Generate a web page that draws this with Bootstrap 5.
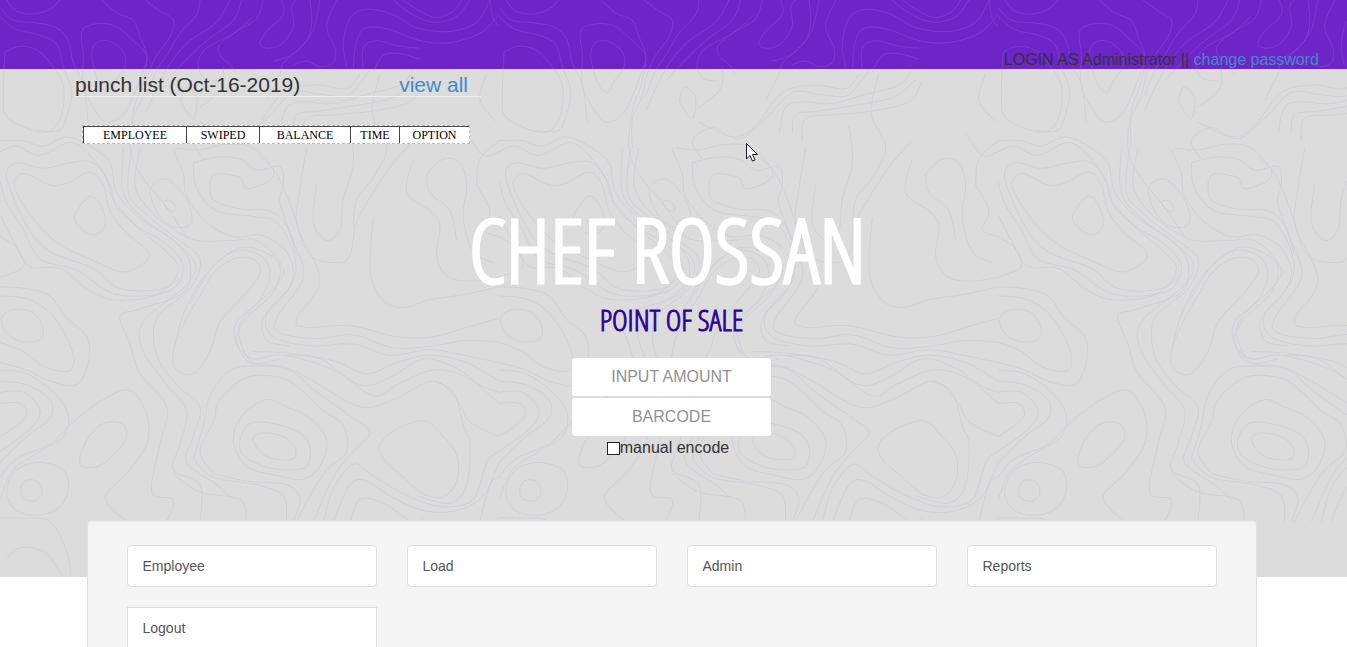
<!DOCTYPE html>
<html lang="en">
<head>
<meta charset="utf-8">
<meta name="viewport" content="width=device-width, initial-scale=1">
<title>Chef Rossan Point of Sale</title>
<link href="https://cdn.jsdelivr.net/npm/bootstrap@5.3.0/dist/css/bootstrap.min.css" rel="stylesheet">
<style>
body{font-family:"Liberation Sans",Arial,sans-serif;font-size:16px;line-height:20px;color:#333;background:#fff}
a{color:#428bca;text-decoration:none}
.hero{height:577px;background:#dcdcdc}
.contours{z-index:0}
.userbar{height:69px;padding-right:28px;line-height:18px}
.punch{width:406px;margin-left:75px}
.punch h1{height:28px;font-size:21px;line-height:32px;border-bottom:1px solid #eee;padding-right:13px;font-weight:400}
.punch table{width:388px;margin:28px 0 0 7px;border:1px dashed #bbb;border-collapse:separate;border-spacing:0;font:12px/16px "Liberation Serif",serif;color:#000;background:#fff;table-layout:fixed}
.punch th{font-weight:400;text-align:center;padding:0;border-left:1px solid #444;border-top:1px solid #444}
.center-stack{padding-right:4px}
.brand,.tagline{font-family:"Open Sans Condensed Light","Open Sans Condensed","Liberation Sans",sans-serif;font-weight:300}
.brand{color:#fff;font-size:88px;line-height:106px;margin-top:52px;padding-right:8px;-webkit-text-stroke:3px #fff}
.tagline{color:#309;font-size:30px;line-height:36px;margin-top:0;-webkit-text-stroke:1px #309}
.entry{width:199px;gap:2px;margin-top:20px}
.entry .form-control{height:38px;border:0;border-radius:3px;text-align:center;font-size:16px}
.entry .form-control::placeholder{color:#919191;opacity:1}
.manual{padding-right:7px}
.tick{appearance:none;width:13px;height:13px;border:1px solid #222;background:#fff;margin:0}
.tick:checked{background:#428bca}
.page-body{padding:0 20px 0 16px}
.panel{max-width:1170px;margin-top:-57px;padding:24px 24px 0;background:#f5f5f5;border:1px solid #e0e0e0;border-bottom:0;border-radius:4px 4px 0 0;box-shadow:inset 0 1px 1px rgba(0,0,0,.05)}
.tiles{--bs-gutter-x:30px;--bs-gutter-y:0;row-gap:20px}
.tile{height:42px;padding:0 15px;border:1px solid #ddd;border-radius:4px;background:#fff;color:#555;font-size:14px}
.pointer{left:745px;top:142px;z-index:5}
</style>
</head>
<body>
<header class="hero position-relative">
  <svg class="contours position-absolute top-0 start-0 w-100 h-100" aria-hidden="true">
    <defs>
      <pattern id="lightMap" width="499" height="580" patternUnits="userSpaceOnUse"><g id="lines" transform="scale(.3333 .37)" fill="none"></g></pattern>
      <pattern id="greyMap" width="499" height="580" patternUnits="userSpaceOnUse"></pattern>
    </defs>
    <rect width="100%" height="69" fill="#6e25c8"/>
    <rect width="100%" height="69" fill="url(#lightMap)"/>
    <rect y="69" width="100%" height="508" fill="url(#greyMap)"/>
  </svg>
  <div class="position-relative">
    <div class="userbar d-flex justify-content-end align-items-end"><div>LOGIN AS Administrator || <a href="#">change password</a></div></div>
    <section class="punch">
      <h1 class="d-flex justify-content-between mb-0"><span>punch list (Oct-16-2019)</span><a href="#">view all</a></h1>
      <table>
        <colgroup><col style="width:103px"><col style="width:73px"><col style="width:91px"><col style="width:49px"><col></colgroup>
        <thead><tr><th>EMPLOYEE</th><th>SWIPED</th><th>BALANCE</th><th>TIME</th><th>OPTION</th></tr></thead>
      </table>
    </section>
    <div class="center-stack d-flex flex-column align-items-center">
      <h2 class="brand mb-0">CHEF ROSSAN</h2>
      <h3 class="tagline mb-0">POINT OF SALE</h3>
      <form class="entry d-flex flex-column">
        <input class="form-control" type="text" placeholder="INPUT AMOUNT" aria-label="Input amount">
        <input class="form-control" type="text" placeholder="BARCODE" aria-label="Barcode">
        <div class="manual d-flex justify-content-center align-items-center"><input class="tick" type="checkbox" id="manual"><label for="manual">manual encode</label></div>
      </form>
    </div>
  </div>
  <svg class="pointer position-absolute" width="14" height="21" viewBox="0 0 14 21" aria-hidden="true"><path d="M1.5 1.5v15.500l3.500-3.500 2.500 5.500 2.500-1-2.500-5.500h5z" fill="#fff" stroke="#111827"/></svg>
</header>
<main class="page-body">
  <nav class="panel position-relative mx-auto">
    <div class="tiles row mx-0 row-cols-4">
      <div class="col"><a class="tile d-flex align-items-center" href="#">Employee</a></div>
      <div class="col"><a class="tile d-flex align-items-center" href="#">Load</a></div>
      <div class="col"><a class="tile d-flex align-items-center" href="#">Admin</a></div>
      <div class="col"><a class="tile d-flex align-items-center" href="#">Reports</a></div>
      <div class="col"><a class="tile rounded-0 d-flex align-items-center" href="#">Logout</a></div>
    </div>
  </nav>
</main>
<script src="https://cdn.jsdelivr.net/npm/bootstrap@5.3.0/dist/js/bootstrap.bundle.min.js"></script>
<script>
// Contour lines of the map tile; a trailing z closes the line.
const contours=`
20,0 50,30 100,38 150,25 180,0
0,20 40,55 110,62 170,75 205,110 220,170 250,230 265,330
0,45 50,80 120,95 170,120 190,180 215,250 195,330 170,355 110,352
15,140 60,125 110,135 150,170 190,230 185,310 150,355 90,350 20,315 10,260 15,140
250,150 245,85 285,65 345,70 400,110 440,150 430,190 400,260 370,310 320,330 280,290 250,230 250,150 z
275,150 290,115 330,112 370,140 375,180 345,220 325,250 295,220 275,150 z
305,0 350,35 400,55 420,100 440,150 430,220 400,300 390,400 420,470 500,560 560,640
435,0 480,30 520,55 510,100 470,150 445,200 430,260 400,320 400,400
600,0 590,40 540,90 500,150 470,190 440,260
690,0 650,60 570,110 520,160 480,220 440,300
725,0 700,55 620,110 550,170 500,220
790,0 770,50 710,85 660,120 660,150 690,175 710,200
760,45 700,90 620,130 595,170 610,210 660,220
845,0 850,40 800,85 780,120 810,130 850,115 880,70 875,20 890,0
930,0 935,60 920,110 870,150 820,165
960,0 940,80 900,130 850,170 840,200 800,270
1010,0 980,70 1005,130 1000,170 960,180 920,165 880,175
1040,180 1030,120 1050,50 1100,25 1180,40 1250,75 1350,85 1430,60 1470,0
1060,185 1070,110 1100,75 1170,80 1260,110 1350,115 1440,90 1497,40
1090,190 1090,130 1130,110 1200,125 1260,130
1120,195 1150,150 1200,145 1260,160
1180,0 1230,35 1300,60 1370,45 1410,0
1210,0 1260,30 1310,48 1360,30 1385,0
1470,0 1480,50 1497,70
545,255 560,235 590,265 580,320 545,280 545,255 z
600,330 700,370 770,340 850,250 950,230 1040,240 1080,200
610,430 580,380 640,345 720,375 800,320 880,250 960,255 1040,260 1080,225 1110,190
670,180 665,240 600,290
840,360 860,290 910,275 1000,280 1100,255 1200,230 1240,190
880,360 890,310 960,300 1100,280 1190,260 1250,215
910,380 920,320 1010,310 1120,300 1230,275 1270,220
1140,200 1120,270 1120,320 1160,400 1120,480 1070,540 1060,620
1460,200 1440,270 1490,330
0,380 70,380 130,395 200,370 270,395 330,440 350,520 420,590 520,650 570,710 550,790 420,835 360,855 390,930 420,1010 500,1100 480,1200 455,1330 520,1350 500,1410
0,410 50,395 120,420 210,385 270,420 320,480 340,540 410,610 500,660 550,720 520,780 430,800 330,790 230,730 120,700 70,620 20,550 0,490
50,480 80,470 150,500 200,495 270,465 310,500 330,570 380,630 440,675 440,705 370,735 270,700 170,655 90,580 45,510 50,480 z
20,480 50,440 130,455 210,440 280,440 330,500 350,560 420,620 510,690 535,730 490,780 360,780 280,725 150,680 80,610 20,480 z
0,580 40,650 90,720 180,725 260,780 340,810 460,800 540,750
0,640 50,670 70,720 0,750
225,580 270,530 305,560 315,610 280,635 235,610 225,580 z
450,520 470,490 510,488 560,540 575,600 530,615 480,585 450,520 z
492,545 510,542 528,560 520,572 497,560 492,545 z
370,400 370,520 430,590 520,650 585,710 560,770 430,870 430,950 500,1040 560,1110 540,1200 520,1270 600,1310 600,1410
395,400 385,520 440,580 530,645 600,700 570,780 470,860 470,960 530,1040 600,1100 580,1180 560,1250 650,1310 700,1350
420,400 405,500 450,570 520,620 590,650 690,650 770,650 840,710 840,760 730,860 720,920 760,980 840,970
520,405 550,470 560,530 620,600 700,640 780,635 850,670 880,730 860,790 790,860 800,920 870,935
530,400 600,405 680,390 760,400 830,470 870,550 900,630 960,760 890,860 920,885 1050,880 1190,910 1300,910 1400,885 1497,860
580,440 650,425 720,430 770,460 840,450 850,500 840,550 880,650 910,750 830,860 840,900 950,915 1060,905 1180,940 1300,935 1400,920 1497,925
580,440 590,510 650,570 760,585 830,600 880,680 880,760 800,850 820,910 930,935 1060,930 1170,960 1290,945 1390,960 1497,980
630,490 650,470 720,480 740,510 805,490 820,460 780,425
630,490 640,540 720,565 810,570 860,610 890,690
640,740 700,700 760,700 780,740 720,810 660,870 630,950 580,1010 530,1000 520,950 560,860 600,800 640,740 z
570,820 640,720 720,670 790,680 840,720 820,790 740,860 710,920 750,980 850,990 940,1030 1080,1100 1180,1080 1300,1030 1370,1080 1410,1140 1497,1180
520,950 550,850 610,750 700,680 780,690 810,740 780,810 710,870 710,930 760,970 850,960 1000,1000 1120,1070 1190,1040 1300,1000 1400,1020 1497,1090
860,960 960,970 1080,1040 1170,1020 1270,970 1370,995 1440,1040 1497,1060
760,950 870,955 1000,975 1100,1010 1190,980 1290,960 1400,980 1497,1030
950,500 940,600 980,650 1020,620 1030,540 1060,440 1050,340
920,400 900,510 890,600 930,690 1010,710 1050,690 1070,600 1120,520 1180,440 1240,380
1120,590 1110,700 1120,770 1160,820 1220,830 1290,810 1400,795 1497,775
1240,430 1220,520 1290,570 1320,610 1310,690 1340,745 1410,760 1497,750
1280,470 1330,430 1380,440 1400,500 1390,590 1420,680 1480,710
1280,470 1290,520 1350,570 1370,650
1400,360 1450,420 1497,410
1430,500 1440,430 1497,380
1430,500 1470,570 1450,620 1497,640
5,860 40,837 100,845 130,890 115,920 60,922 20,900 5,860 z
0,800 70,805 130,830 180,880 220,960 205,1003 130,990 70,950 0,925
0,775 80,780 150,800 200,860 260,910 265,980 230,1040 150,1030 80,1000 0,980
0,1000 80,1010 160,1060 205,1120 190,1180 120,1220 40,1270 0,1350
0,1030 80,1040 150,1080 150,1130 80,1180 0,1250
0,1060 70,1060 120,1110 90,1160 0,1220
0,1090 60,1090 80,1120 50,1150 0,1180
260,1190 310,1145 365,1145 380,1180 350,1220 295,1260 240,1255 260,1190 z
0,1290 50,1240 150,1200 220,1140 310,1080 390,1055 440,1120 440,1200 380,1280 315,1345 380,1410
62,1325 75,1300 110,1300 126,1330 105,1354 72,1348 62,1325 z
20,1330 50,1270 120,1250 190,1270 205,1320 180,1370 120,1392 50,1380 20,1330 z
0,1400 70,1400 150,1410 200,1490 215,1568
20,1510 60,1480 130,1490 170,1530 190,1568
760,1185 790,1170 850,1180 885,1210 880,1240 820,1240 780,1220 760,1185 z
720,1190 750,1145 820,1145 900,1170 930,1210 920,1260 860,1270 790,1260 730,1230 720,1190 z
700,1190 730,1120 800,1080 860,1100 930,1130 980,1190 960,1260 910,1295 830,1285 740,1260 700,1190 z
640,1280 600,1220 640,1140 660,1080 740,1020 840,1020 900,1050 970,1110 1030,1150 1040,1220 980,1270 930,1340 890,1410
580,1240 610,1150 630,1070 690,1000 780,990 870,1000 950,1060 1060,1130 1110,1170 1060,1220 1000,1290 940,1410
580,1240 640,1290 770,1310 850,1340 860,1410
640,1280 740,1300 860,1310 900,1350 880,1410
520,1280 600,1330 720,1350 740,1410
1140,1200 1190,1160 1270,1137 1320,1170 1370,1230 1370,1300 1330,1343 1270,1335 1210,1290 1150,1240 1140,1200 z
970,1410 1000,1320 1060,1255 1110,1280 1180,1320 1250,1350 1330,1370 1420,1350 1460,1250 1497,1220
1000,1410 1050,1310 1100,1300 1170,1340 1270,1380 1370,1380 1450,1340 1497,1250
1050,1410 1080,1350 1150,1360 1230,1410
1300,1030 1360,1060 1390,1150 1410,1200 1400,1310 1350,1360 1250,1340
1440,1410 1470,1310 1497,1290
1080,1568 1130,1480 1190,1410
1140,1568 1170,1500 1240,1440 1270,1400
1300,1568 1330,1500 1400,1440 1440,1410
1380,1568 1420,1490 1497,1400`;
const lines=document.getElementById('lines');
contours.trim().split('\n').forEach(row=>{
  const closed=row.trim().endsWith('z');
  let p=row.replace('z','').trim().split(/\s+/).map(s=>s.split(',').map(Number));
  if(closed)p.pop();
  const n=p.length,at=i=>closed?p[(i+n)%n]:p[Math.max(0,Math.min(n-1,i))];
  let d='M'+p[0];
  for(let i=0;i<(closed?n:n-1);i++){
    const a=at(i-1),b=at(i),c=at(i+1),e=at(i+2);
    d+=`C${b[0]+(c[0]-a[0])/6},${b[1]+(c[1]-a[1])/6} ${c[0]-(e[0]-b[0])/6},${c[1]-(e[1]-b[1])/6} ${c}`;
  }
  const path=document.createElementNS('http://www.w3.org/2000/svg','path');
  path.setAttribute('d',d);
  lines.append(path);
});
// The same lines are drawn pale on the purple bar and slate on the grey area.
const grey=lines.cloneNode(true);
grey.removeAttribute('id');
lines.setAttribute('stroke','#823fd1');
grey.setAttribute('stroke','#cbccd5');
[lines,grey].forEach(g=>g.setAttribute('stroke-width','2'));
document.querySelector('#greyMap').replaceChildren(grey);
</script>
</body>
</html>
